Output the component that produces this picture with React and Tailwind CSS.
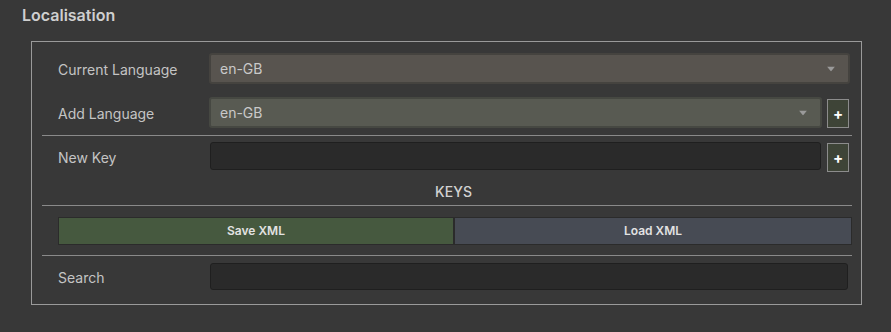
import React, { useState } from "react";

const font = { fontFamily: "Inter, 'Noto Sans', sans-serif" };

const Arrow = () => (
  <svg width="8" height="5" viewBox="0 0 8 5" className="absolute right-[13px] top-1/2 -translate-y-1/2">
    <path d="M0 0 H8 L4 5 Z" fill="#9a9a9a" />
  </svg>
);

const Dropdown = ({ value, tone }) => (
  <div
    className={`relative flex-1 h-[31px] rounded-[3px] border-2 flex items-center pl-[9px] text-[14px] text-[#c9c9c9] ${tone}`}
  >
    {value}
    <Arrow />
  </div>
);

const PlusButton = () => (
  <button className="w-[22px] h-[29px] shrink-0 bg-[#3e4437] border border-[#8c8c8c] flex items-center justify-center text-white text-[15px] font-bold leading-none">
    +
  </button>
);

const Label = ({ children }) => (
  <div className="w-[151px] shrink-0 pt-[2px] text-[14px] text-[#c4c4c4]">{children}</div>
);

const Divider = ({ className = "" }) => <div className={`h-px bg-[#8a8a8a] ${className}`} />;

export default function App() {
  const [current] = useState("en-GB");
  const [adding] = useState("en-GB");

  return (
    <div className="w-[891px] h-[332px] bg-[#383838] overflow-hidden" style={font}>
      <div className="ml-[22px] h-[30px] leading-[30px] text-[16px] font-semibold text-[#cfcfcf]">
        Localisation
      </div>

      <div className="ml-[31px] mt-[11px] w-[831px] border border-[#9a9a9a] pl-[10px] pr-[9px] pt-[11px] pb-[14px]">
        {/* current language */}
        <div className="flex items-center pl-[16px] pr-[2px]">
          <Label>Current Language</Label>
          <Dropdown value={current} tone="bg-[#58544f] border-[#45433f]" />
        </div>

        {/* add language */}
        <div className="flex items-end mt-[13px] pl-[16px] pr-[3px]">
          <div className="self-center"><Label>Add Language</Label></div>
          <Dropdown value={adding} tone="bg-[#585a52] border-[#464842]" />
          <div className="ml-[5px]"><PlusButton /></div>
        </div>

        <Divider className="mt-[7px]" />

        {/* new key */}
        <div className="flex items-start mt-[6px] pl-[16px] pr-[3px]">
          <div className="h-[28px] flex items-center"><Label>New Key</Label></div>
          <input className="flex-1 h-[28px] ml-[1px] bg-[#2a2a2a] border border-[#1f1f1f] rounded-[3px] outline-none" />
          <div className="ml-[6px] mt-[1px]"><PlusButton /></div>
        </div>

        <div className="mt-[10px] h-[20px] leading-[20px] text-center pl-[13px] text-[14px] font-medium text-[#d2d2d2]">
          KEYS
        </div>

        <Divider className="mt-[3px]" />

        {/* xml */}
        <div className="flex mt-[11px] ml-[16px] h-[28px]">
          <button className="w-[396px] h-full bg-[#46593f] border border-[#2b2b2b] text-[12px] font-semibold text-[#e2e2e2]">
            Save XML
          </button>
          <button className="flex-1 h-full bg-[#474b54] border border-[#2b2b2b] text-[12px] font-semibold text-[#e2e2e2]">
            Load XML
          </button>
        </div>

        <Divider className="mt-[10px]" />

        {/* search */}
        <div className="flex items-center mt-[7px] pl-[16px] pr-[4px]">
          <Label>Search</Label>
          <input className="flex-1 h-[27px] ml-[1px] bg-[#2a2a2a] border border-[#1f1f1f] rounded-[3px] outline-none" />
        </div>
      </div>
    </div>
  );
}
